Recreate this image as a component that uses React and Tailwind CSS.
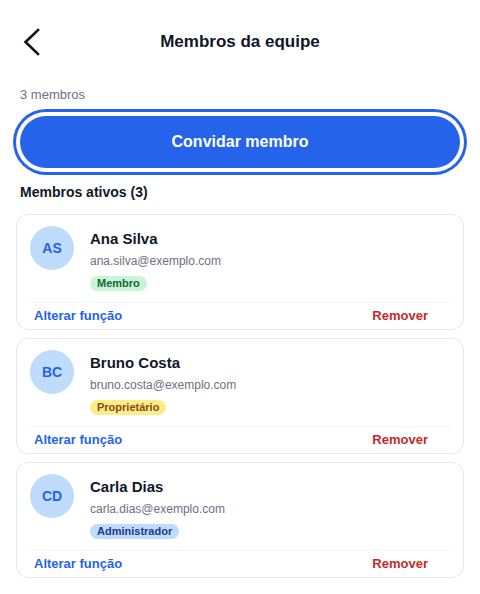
import { useState } from 'react';

const MEMBERS = [
  {
    id: 1,
    initials: 'AS',
    name: 'Ana Silva',
    email: 'ana.silva@exemplo.com',
    role: 'Membro',
    badge: 'bg-[#c9f5d6] text-[#166534]',
  },
  {
    id: 2,
    initials: 'BC',
    name: 'Bruno Costa',
    email: 'bruno.costa@exemplo.com',
    role: 'Proprietário',
    badge: 'bg-[#fdec8a] text-[#854d0e]',
  },
  {
    id: 3,
    initials: 'CD',
    name: 'Carla Dias',
    email: 'carla.dias@exemplo.com',
    role: 'Administrador',
    badge: 'bg-[#bfdbfe] text-[#1e3a8a]',
  },
];

function BackIcon() {
  return (
    <svg width="18" height="28" viewBox="0 0 18 28" fill="none">
      <path d="M16 2 L3.5 14 L16 26" stroke="#111" strokeWidth="2.6" strokeLinecap="square" />
    </svg>
  );
}

function MemberCard({ m }) {
  return (
    <div className="-mx-1 rounded-xl border border-gray-200 bg-white pl-[13px] pr-[11px] pt-[11px] pb-[4px]">
      <div className="flex gap-4">
        <div className="w-11 h-11 shrink-0 rounded-full bg-[#bfdbfe] flex items-center justify-center text-[14px] font-bold text-[#2563eb]">
          {m.initials}
        </div>
        <div className="flex flex-col items-start">
          <div className="mt-[3px] text-[15px] leading-[20px] font-bold text-gray-900">{m.name}</div>
          <div className="mt-[4px] text-[12px] leading-[16px] text-gray-500">{m.email}</div>
          <span className={`mt-[7px] px-[7px] rounded-full text-[11px] leading-[15px] font-bold ${m.badge}`}>
            {m.role}
          </span>
        </div>
      </div>
      <div className="mt-[11px] h-px bg-gray-100" />
      <div className="flex justify-between pt-[4px]">
        <button className="pl-1 text-[13px] leading-[18px] font-bold text-[#2563eb]">Alterar função</button>
        <button className="pr-6 text-[13px] leading-[18px] font-bold text-[#c62828]">Remover</button>
      </div>
    </div>
  );
}

export default function App() {
  const [members] = useState(MEMBERS);

  return (
    <div className="min-h-screen bg-white px-5 font-[family-name:'Liberation_Sans',Arial,sans-serif]">
      {/* cabeçalho */}
      <div className="h-[84px] grid grid-cols-[40px_1fr_40px] items-center">
        <button className="ml-[2px] flex items-center">
          <BackIcon />
        </button>
        <h1 className="text-center text-[17px] font-bold text-gray-900">Membros da equipe</h1>
        <div />
      </div>

      <p className="mt-[2px] text-[13px] leading-[18px] text-gray-500">{members.length} membros</p>

      <button className="mt-[12px] w-full h-[52px] rounded-full bg-[#2563eb] text-white text-[16px] font-bold ring-[3px] ring-[#2563eb] ring-offset-4 ring-offset-white">
        Convidar membro
      </button>

      <h2 className="mt-[14px] text-[14px] leading-[20px] font-bold text-gray-900">
        Membros ativos ({members.length})
      </h2>

      <div className="mt-[12px] flex flex-col gap-2 pb-4">
        {members.map(m => (
          <MemberCard key={m.id} m={m} />
        ))}
      </div>
    </div>
  );
}
